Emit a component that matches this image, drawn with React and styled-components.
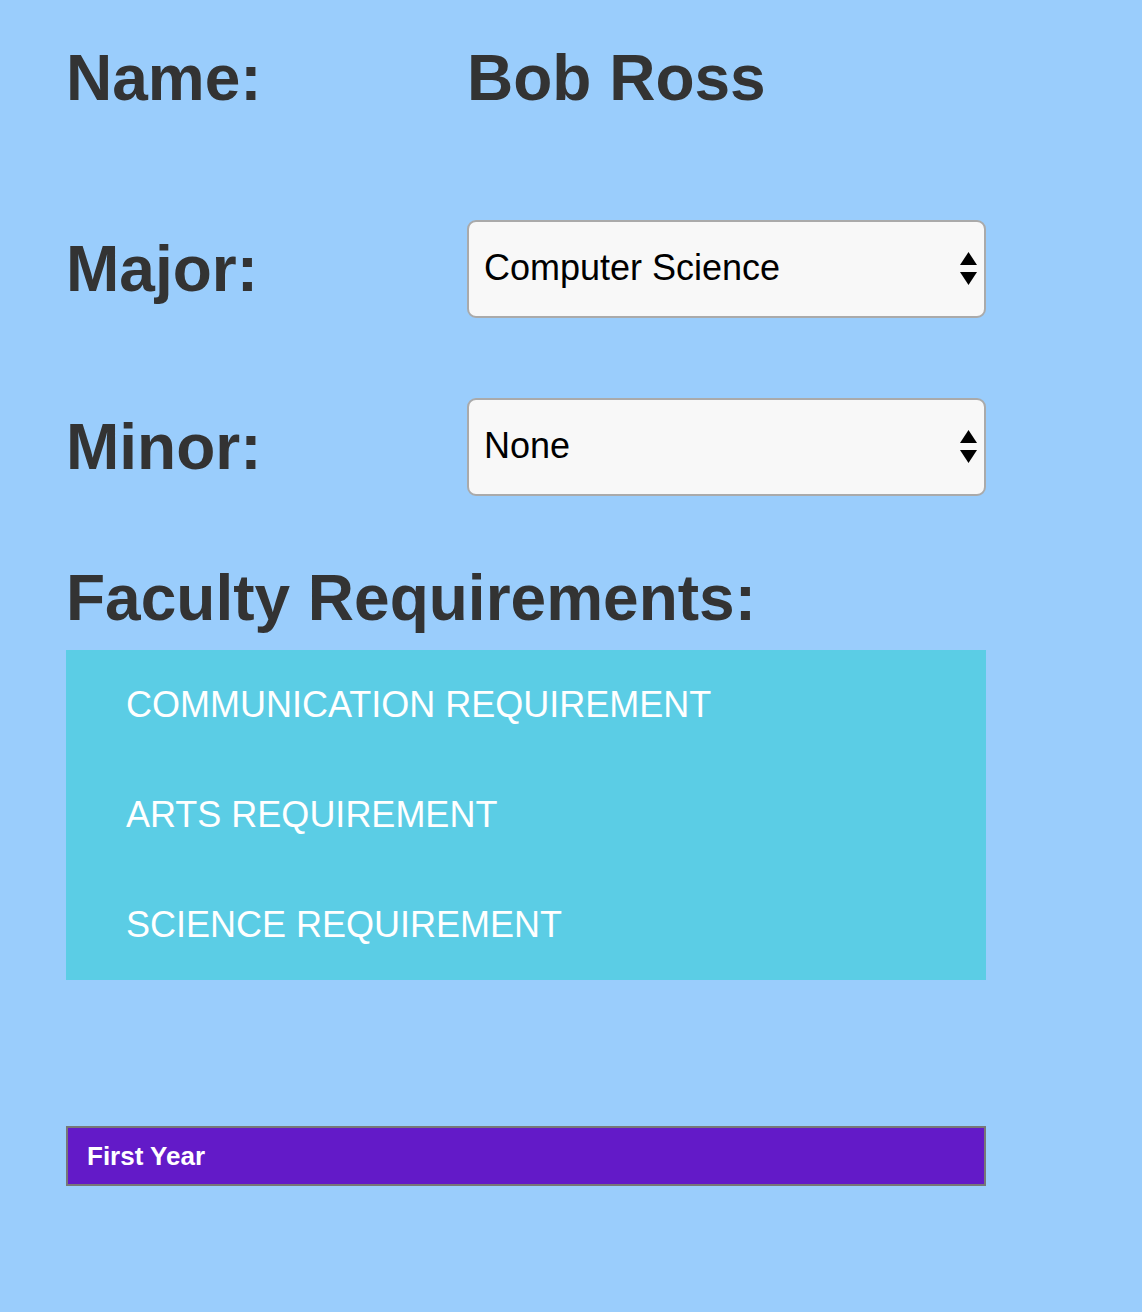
import { useState } from "react";
import styled, { createGlobalStyle } from "styled-components";

const GlobalStyle = createGlobalStyle`
  html, body {
    margin: 0;
    padding: 0;
    background-color: #9acdfc;
  }
  body {
    font-family: "Liberation Sans", Arial, Helvetica, sans-serif;
    color: #333;
  }
`;

const requirements = [
  "COMMUNICATION REQUIREMENT",
  "ARTS REQUIREMENT",
  "SCIENCE REQUIREMENT",
];

function UpDownArrows() {
  return (
    <ArrowIcon width="17" height="33" viewBox="0 0 17 33">
      <polygon points="8.5,0 17,13 0,13" fill="#000" />
      <polygon points="0,20 17,20 8.5,33" fill="#000" />
    </ArrowIcon>
  );
}

function Dropdown({ value, options, onChange }) {
  return (
    <SelectWrap>
      <Select value={value} onChange={(e) => onChange(e.target.value)}>
        {options.map((o) => (
          <option key={o}>{o}</option>
        ))}
      </Select>
      <UpDownArrows />
    </SelectWrap>
  );
}

export default function App() {
  const [major, setMajor] = useState("Computer Science");
  const [minor, setMinor] = useState("None");

  return (
    <>
      <GlobalStyle />
      <Page>
        <Row $top={29}>
          <Label>Name:</Label>
          <Value>Bob Ross</Value>
        </Row>
        <Row $top={93}>
          <Label>Major:</Label>
          <Dropdown
            value={major}
            onChange={setMajor}
            options={["Computer Science", "Mathematics", "Physics"]}
          />
        </Row>
        <Row $top={80}>
          <Label>Minor:</Label>
          <Dropdown
            value={minor}
            onChange={setMinor}
            options={["None", "Statistics", "Economics"]}
          />
        </Row>
        <Heading>Faculty Requirements:</Heading>
        <ReqList>
          {requirements.map((r) => (
            <ReqItem key={r}>{r}</ReqItem>
          ))}
        </ReqList>
        <YearBar>First Year</YearBar>
      </Page>
    </>
  );
}

const Page = styled.div`
  width: 920px;
  padding: 0 0 126px 66px;
`;

const Row = styled.div`
  display: flex;
  align-items: center;
  height: 98px;
  margin-top: ${(p) => p.$top}px;
`;

const Label = styled.div`
  width: 401px;
  flex-shrink: 0;
  font-size: 64px;
  font-weight: bold;
`;

const Value = styled.div`
  font-size: 64px;
  font-weight: bold;
`;

const SelectWrap = styled.div`
  position: relative;
  width: 519px;
  height: 98px;
`;

const Select = styled.select`
  appearance: none;
  -webkit-appearance: none;
  box-sizing: border-box;
  width: 100%;
  height: 100%;
  margin: 0;
  padding: 0 40px 4px 15px;
  border: 2px solid #aaa;
  border-radius: 9px;
  background-color: #f8f8f8;
  color: #000;
  font-family: "Liberation Sans", Arial, sans-serif;
  font-size: 36px;
  outline: none;
`;

const ArrowIcon = styled.svg`
  position: absolute;
  right: 9px;
  top: 32px;
  pointer-events: none;
`;

const Heading = styled.h2`
  margin: 65px 0 15px;
  font-size: 64px;
  font-weight: bold;
`;

const ReqList = styled.div`
  background-color: #5bcde5;
`;

const ReqItem = styled.div`
  display: flex;
  align-items: center;
  height: 110px;
  padding-left: 60px;
  color: #fff;
  font-size: 36px;
`;

const YearBar = styled.div`
  display: flex;
  align-items: center;
  box-sizing: border-box;
  height: 60px;
  margin-top: 146px;
  padding-left: 19px;
  border: 2px solid #777;
  background-color: #631ac8;
  color: #fff;
  font-size: 26px;
  font-weight: bold;
`;
